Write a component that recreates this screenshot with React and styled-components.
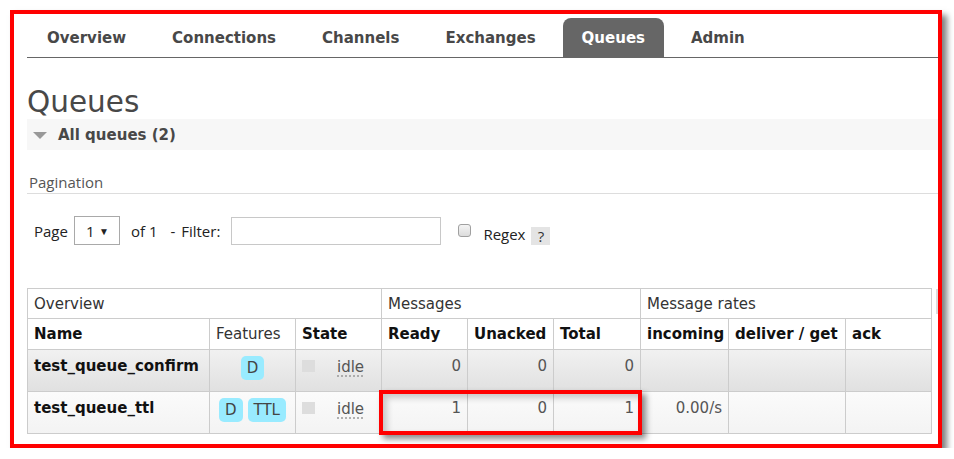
import React from 'react';
import styled, { createGlobalStyle } from 'styled-components';

const GlobalStyle = createGlobalStyle`
  body {
    margin: 0;
    background: #fff;
    font-family: "DejaVu Sans", Verdana, sans-serif;
  }
`;

const Frame = styled.div`
  position: relative;
  box-sizing: border-box;
  width: 932px;
  height: 438px;
  margin: 10px 0 0 10px;
  border: 4px solid #f00;
  box-shadow: 5px 5px 6px rgba(0, 0, 0, 0.5);
  padding: 4px 0 0 13px;
  overflow: hidden;
  background: #fff;
`;

const Tabs = styled.nav`
  display: flex;
  gap: 8px;
  padding-left: 1px;
  border-bottom: 1px solid #666;
`;

const Tab = styled.div`
  padding: 0 19px;
  height: 39px;
  line-height: 40px;
  font-size: 15px;
  font-weight: bold;
  color: ${(p) => (p.$active ? '#fff' : '#484848')};
  background: ${(p) => (p.$active ? '#666' : 'transparent')};
  border-radius: 8px 8px 0 0;
`;

const Heading = styled.h1`
  margin: 27px 0 0;
  font-size: 29.5px;
  line-height: 34px;
  font-weight: normal;
  color: #484848;
`;

const SectionBar = styled.div`
  display: flex;
  align-items: center;
  gap: 11px;
  height: 31px;
  padding-left: 6px;
  background: #f7f7f7;
  font-size: 15px;
  font-weight: bold;
  color: #484848;
`;

const Triangle = styled.span`
  width: 0;
  height: 0;
  border-left: 7px solid transparent;
  border-right: 7px solid transparent;
  border-top: 7px solid #999;
  margin-top: 1px;
`;

const SubTitle = styled.div`
  margin-top: 22px;
  padding-left: 2px;
  height: 21px;
  line-height: 20px;
  border-bottom: 1px solid #ddd;
  font-family: "Open Sans", sans-serif;
  font-size: 15px;
  color: #555;
`;

const FilterRow = styled.div`
  display: flex;
  align-items: center;
  height: 29px;
  margin-top: 22px;
  padding-left: 7px;
  font-family: "Open Sans", sans-serif;
  font-size: 15px;
  color: #222;
`;

const Label = styled.span`
  margin-left: ${(p) => p.$ml || 0}px;
  margin-top: ${(p) => p.$mt || 0}px;
  word-spacing: ${(p) => p.$ws || 0}px;
`;

const SelectBox = styled.div`
  box-sizing: border-box;
  display: flex;
  align-items: center;
  justify-content: space-between;
  width: 46px;
  height: 29px;
  margin-left: 6px;
  padding: 0 10px 0 11px;
  border: 1px solid #a9a9a9;
  background: #fff;
  font-size: 15px;

  span:last-child {
    font-size: 10px;
  }
`;

const TextInput = styled.div`
  box-sizing: border-box;
  width: 210px;
  height: 28px;
  margin-left: 11px;
  border: 1px solid #c8c8c8;
  background: #fff;
`;

const CheckBox = styled.span`
  box-sizing: border-box;
  width: 13px;
  height: 13px;
  margin-left: 17px;
  border: 1px solid #a0a0a0;
  border-radius: 3px;
  background: linear-gradient(#f4f4f4, #dcdcdc);
`;

const HelpBox = styled.span`
  display: flex;
  align-items: center;
  justify-content: center;
  width: 19px;
  height: 18px;
  margin: 10px 0 0 6px;
  background: #e4e4e4;
  color: #333;
`;

const TableArea = styled.div`
  position: relative;
  display: flex;
  align-items: flex-start;
  gap: 4px;
  margin-top: 43px;
`;

const Table = styled.table`
  border-collapse: collapse;
  table-layout: fixed;
  width: 905px;
  font-size: 15px;
  color: #111;
`;

const HeadRow = styled.tr`
  height: ${(p) => p.$h}px;
  background: #fff;
`;

const Th = styled.th`
  border: 1px solid #ccc;
  padding: 0 6px;
  text-align: left;
  vertical-align: middle;
  white-space: nowrap;
  font-weight: ${(p) => (p.$plain ? 'normal' : 'bold')};
  color: ${(p) => (p.$plain ? '#333' : '#111')};
`;

const BodyRow = styled.tr`
  height: 42px;
  background: ${(p) =>
    p.$alt
      ? 'linear-gradient(#fbfbfb, #f3f3f3)'
      : 'linear-gradient(#f1f1f1, #e0e0e0)'};
`;

const Td = styled.td`
  border: 1px solid #ccc;
  padding: 4px 6px 0;
  vertical-align: top;
  line-height: 24px;
  white-space: nowrap;
  text-align: ${(p) => p.$align || 'left'};
  font-weight: ${(p) => (p.$bold ? 'bold' : 'normal')};
  color: ${(p) => (p.$bold ? '#111' : '#555')};
`;

const Badges = styled.div`
  display: flex;
  justify-content: center;
  gap: 5px;
  margin-top: 2px;
`;

const Badge = styled.span`
  height: 24px;
  line-height: 25px;
  padding: 0 6px;
  border-radius: 5px;
  background: #99ebff;
  color: #444;
`;

const StateCell = styled.div`
  display: flex;
  align-items: center;
  gap: 22px;
  margin-top: 1px;
`;

const StateDot = styled.span`
  width: 13px;
  height: 12px;
  margin-top: -2px;
  background: #ddd;
`;

const Idle = styled.abbr`
  text-decoration: underline dotted #999;
  text-underline-offset: 4px;
  color: #555;
`;

const ColumnToggle = styled.div`
  width: 20px;
  height: 25px;
  margin-top: 1px;
  background: #dcdcdc;
`;

const Highlight = styled.div`
  position: absolute;
  left: 352px;
  top: 102px;
  width: 263px;
  height: 45px;
  box-sizing: border-box;
  border: 4px solid #f00;
  box-shadow: 4px 4px 6px rgba(0, 0, 0, 0.45), inset 4px 4px 6px rgba(0, 0, 0, 0.2);
  pointer-events: none;
`;

const tabs = ['Overview', 'Connections', 'Channels', 'Exchanges', 'Queues', 'Admin'];
const colWidths = [182, 86, 86, 86, 86, 87, 88, 117, 86];

const queues = [
  { name: 'test_queue_confirm', features: ['D'], ready: 0, unacked: 0, total: 0, incoming: '' },
  { name: 'test_queue_ttl', features: ['D', 'TTL'], ready: 1, unacked: 0, total: 1, incoming: '0.00/s' },
];

export default function App() {
  return (
    <>
      <GlobalStyle />
      <Frame>
        <Tabs>
          {tabs.map((t) => (
            <Tab key={t} $active={t === 'Queues'}>{t}</Tab>
          ))}
        </Tabs>

        <Heading>Queues</Heading>
        <SectionBar>
          <Triangle />
          All queues (2)
        </SectionBar>

        <SubTitle>Pagination</SubTitle>
        <FilterRow>
          <Label>Page</Label>
          <SelectBox>
            <span>1</span>
            <span>▼</span>
          </SelectBox>
          <Label $ml={11}>of 1</Label>
          <Label $ml={13} $ws={2}>- Filter:</Label>
          <TextInput />
          <CheckBox />
          <Label $ml={12} $mt={6}>Regex</Label>
          <HelpBox>?</HelpBox>
        </FilterRow>

        <TableArea>
          <Table>
            <colgroup>
              {colWidths.map((w, i) => (
                <col key={i} style={{ width: w }} />
              ))}
            </colgroup>
            <thead>
              <HeadRow $h={30}>
                <Th $plain colSpan={3}>Overview</Th>
                <Th $plain colSpan={3}>Messages</Th>
                <Th $plain colSpan={3}>Message rates</Th>
              </HeadRow>
              <HeadRow $h={31}>
                <Th>Name</Th>
                <Th $plain>Features</Th>
                <Th>State</Th>
                <Th>Ready</Th>
                <Th>Unacked</Th>
                <Th>Total</Th>
                <Th>incoming</Th>
                <Th>deliver / get</Th>
                <Th>ack</Th>
              </HeadRow>
            </thead>
            <tbody>
              {queues.map((q, i) => (
                <BodyRow key={q.name} $alt={i % 2 === 1}>
                  <Td $bold>{q.name}</Td>
                  <Td>
                    <Badges>
                      {q.features.map((f) => (
                        <Badge key={f}>{f}</Badge>
                      ))}
                    </Badges>
                  </Td>
                  <Td>
                    <StateCell>
                      <StateDot />
                      <Idle title="idle">idle</Idle>
                    </StateCell>
                  </Td>
                  <Td $align="right">{q.ready}</Td>
                  <Td $align="right">{q.unacked}</Td>
                  <Td $align="right">{q.total}</Td>
                  <Td $align="right">{q.incoming}</Td>
                  <Td />
                  <Td />
                </BodyRow>
              ))}
            </tbody>
          </Table>
          <ColumnToggle />
          <Highlight />
        </TableArea>
      </Frame>
    </>
  );
}
